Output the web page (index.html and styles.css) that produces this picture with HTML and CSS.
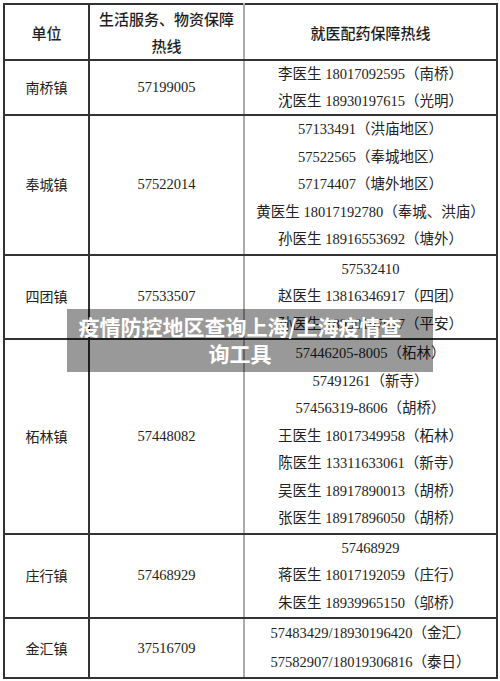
FILE: index.html
```html
<!DOCTYPE html>
<html lang="zh-CN">
<head>
<meta charset="utf-8">
<title>疫情防控地区查询上海/上海疫情查询工具</title>
<link rel="stylesheet" href="styles.css">
</head>
<body>
<div class="sheet">
  <table class="hotlines">
    <colgroup>
      <col class="w1"><col class="w2"><col class="w3">
    </colgroup>
    <thead>
      <tr>
        <th class="c1">单位</th>
        <th class="c2">生活服务、物资保障<br>热线</th>
        <th class="c3">就医配药保障热线</th>
      </tr>
    </thead>
    <tbody>
      <tr class="tight">
        <td class="c1">南桥镇</td>
        <td class="c2">57199005</td>
        <td class="c3">李医生 18017092595（南桥）<br>沈医生 18930197615（光明）</td>
      </tr>
      <tr>
        <td class="c1">奉城镇</td>
        <td class="c2">57522014</td>
        <td class="c3">57133491（洪庙地区）<br>57522565（奉城地区）<br>57174407（塘外地区）<br>黄医生 18017192780（奉城、洪庙）<br>孙医生 18916553692（塘外）</td>
      </tr>
      <tr>
        <td class="c1">四团镇</td>
        <td class="c2">57533507</td>
        <td class="c3">57532410<br>赵医生 13816346917（四团）<br>孙医生 18930197617（平安）</td>
      </tr>
      <tr>
        <td class="c1">柘林镇</td>
        <td class="c2">57448082</td>
        <td class="c3">57446205-8005（柘林）<br>57491261（新寺）<br>57456319-8606（胡桥）<br>王医生 18017349958（柘林）<br>陈医生 13311633061（新寺）<br>吴医生 18917890013（胡桥）<br>张医生 18917896050（胡桥）</td>
      </tr>
      <tr>
        <td class="c1">庄行镇</td>
        <td class="c2">57468929</td>
        <td class="c3">57468929<br>蒋医生 18017192059（庄行）<br>朱医生 18939965150（邬桥）</td>
      </tr>
      <tr class="loose">
        <td class="c1">金汇镇</td>
        <td class="c2">37516709</td>
        <td class="c3">57483429/18930196420（金汇）<br>57582907/18019306816（泰日）</td>
      </tr>
    </tbody>
  </table>
  <div class="caption">疫情防控地区查询上海/上海疫情查询工具</div>
</div>
</body>
</html>
```

FILE: styles.css
```css
html, body {
  margin: 0;
  padding: 0;
  background: #ffffff;
}

.sheet {
  position: relative;
  padding: 3px 4px 3px 3px;
}

.hotlines {
  border-collapse: collapse;
  table-layout: fixed;
  width: 493px;
  font-family: "Liberation Serif", "Noto Sans CJK SC", serif;
  font-size: 14.5px;
  line-height: 27.5px;
  color: #222222;
  text-align: center;
}

.w1 { width: 85px; }
.w2 { width: 155px; }
.w3 { width: 253px; }

.hotlines th,
.hotlines td {
  border: 2px solid #333333;
  padding: 0;
  vertical-align: middle;
  white-space: nowrap;
}

.hotlines th {
  font-family: "Noto Sans CJK SC", sans-serif;
  font-size: 15px;
  font-weight: 500;
  line-height: 27px;
  color: #1e1e1e;
}

.hotlines td.c1 {
  font-family: "Noto Sans CJK SC", sans-serif;
  font-size: 14px;
  font-weight: 400;
}

.hotlines .tight td {
  line-height: 26.5px;
}

.hotlines .loose td {
  line-height: 29px;
}

.hotlines .c2 {
  border-right: 2px solid #ababab;
}

.hotlines .c3 {
  border-left: 2px solid #ababab;
}

.caption {
  position: absolute;
  left: 67px;
  top: 309px;
  width: 326px;
  padding: 4px 30px 5px 10px;
  background: rgba(0, 0, 0, 0.4);
  color: #ffffff;
  font-family: "Noto Sans CJK SC", sans-serif;
  font-size: 21px;
  font-weight: 700;
  line-height: 27px;
  text-align: center;
}
```
